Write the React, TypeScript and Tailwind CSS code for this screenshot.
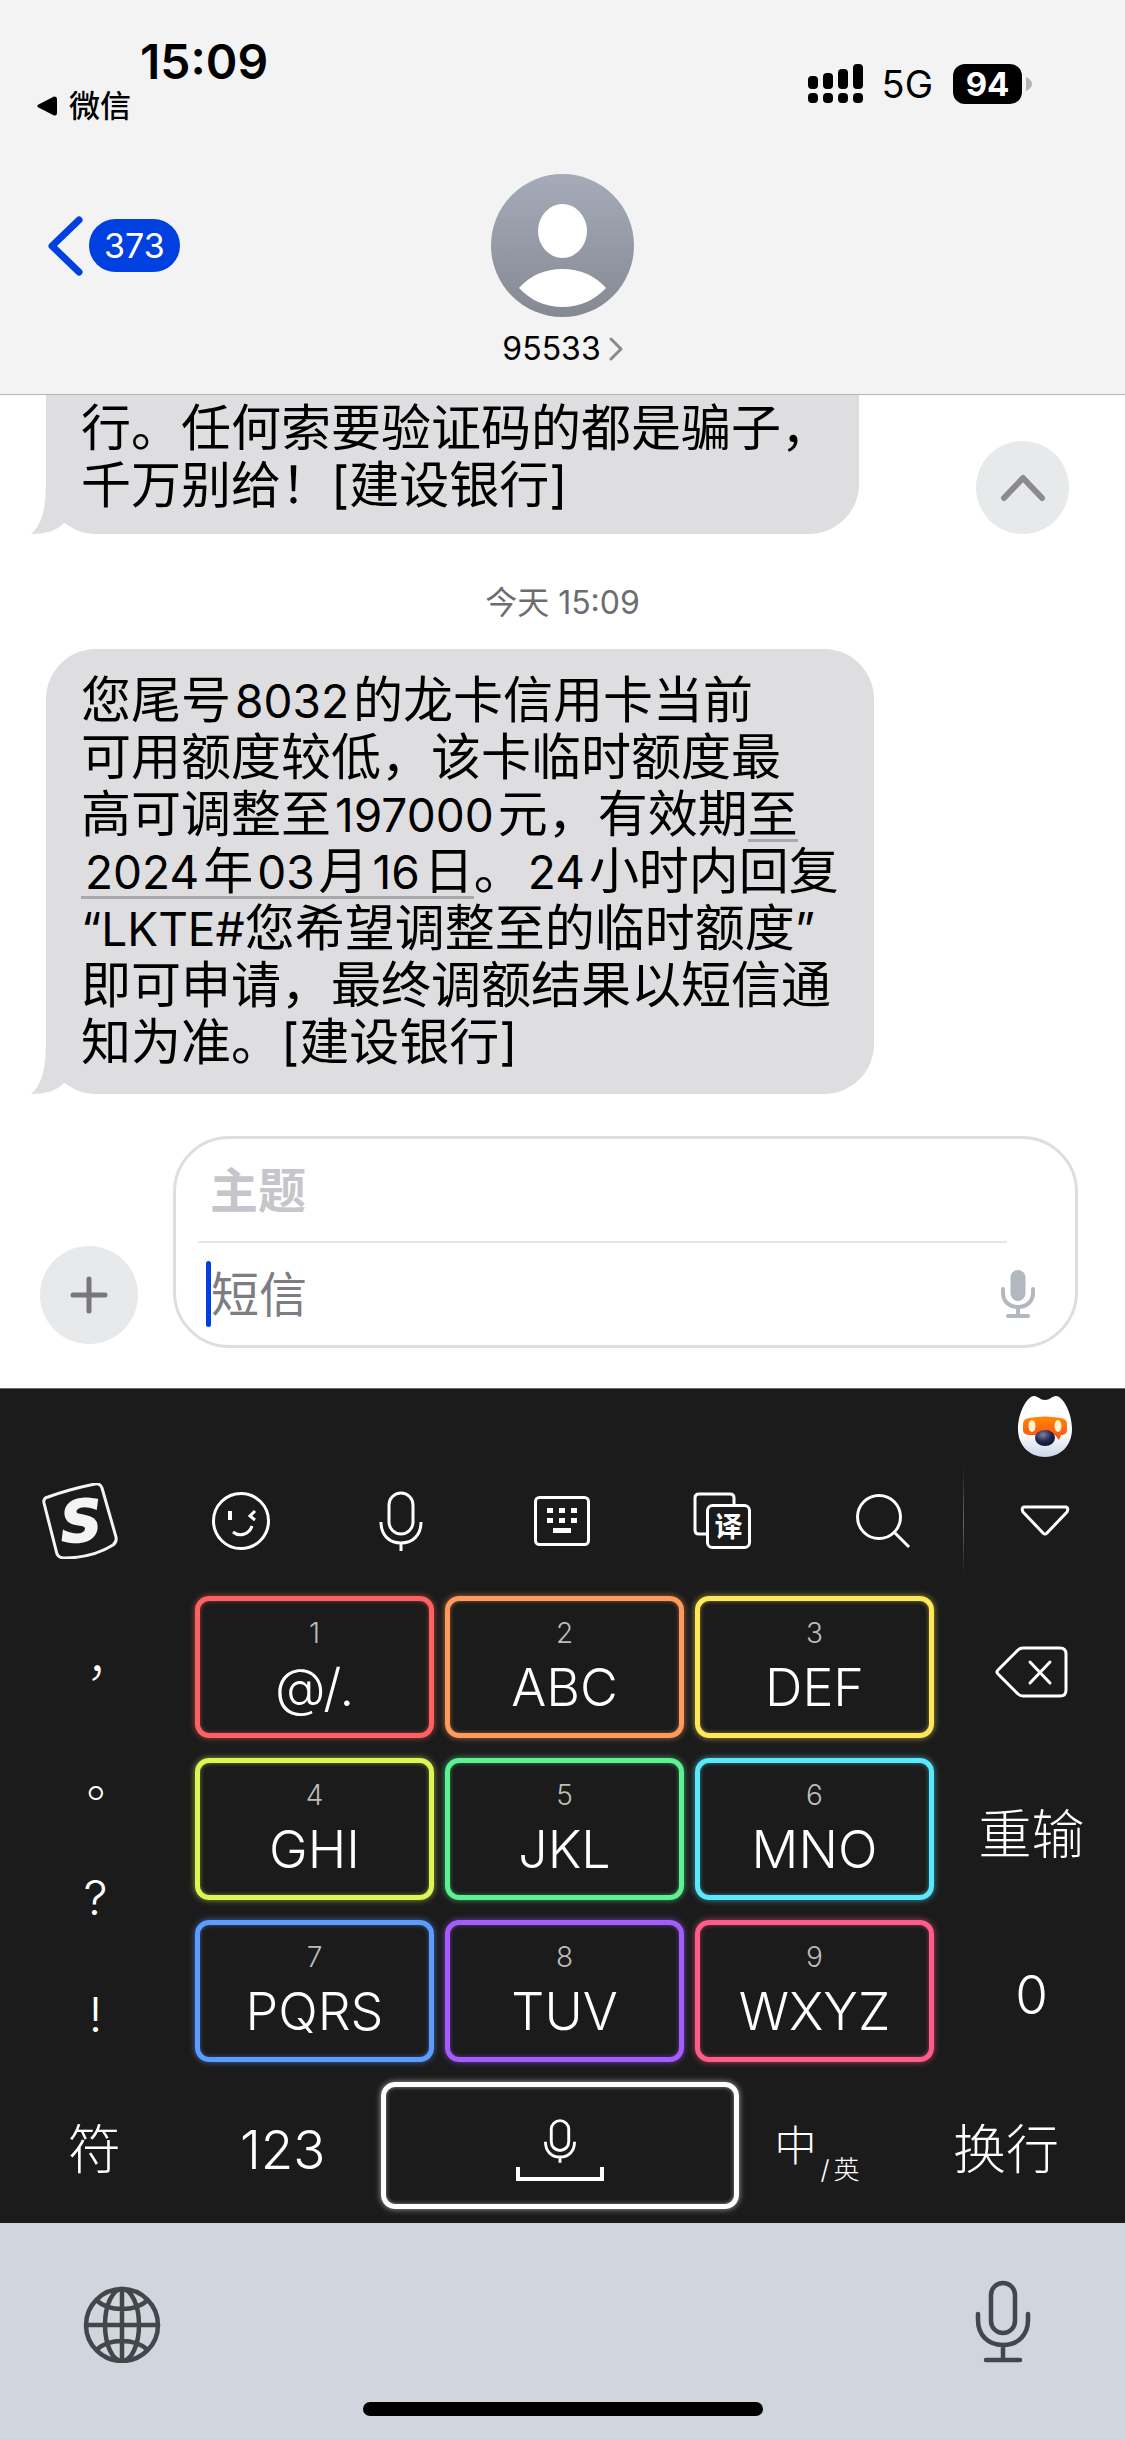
import React from 'react'

const BUBBLE_ONE = ['行。任何索要验证码的都是骗子，', '千万别给！[建设银行]']

const KEYS = [
  { num: '1', label: '@/.', color: 'border-[#ff6161] shadow-[0_0_6px_#ff616199,inset_0_0_4px_#ff616180]' },
  { num: '2', label: 'ABC', color: 'border-[#ff9a5c] shadow-[0_0_6px_#ff9a5c99,inset_0_0_4px_#ff9a5c80]' },
  { num: '3', label: 'DEF', color: 'border-[#ffe75a] shadow-[0_0_6px_#ffe75a99,inset_0_0_4px_#ffe75a80]' },
  { num: '4', label: 'GHI', color: 'border-[#dcf755] shadow-[0_0_6px_#dcf75599,inset_0_0_4px_#dcf75580]' },
  { num: '5', label: 'JKL', color: 'border-[#5cf292] shadow-[0_0_6px_#5cf29299,inset_0_0_4px_#5cf29280]' },
  { num: '6', label: 'MNO', color: 'border-[#5ae8fb] shadow-[0_0_6px_#5ae8fb99,inset_0_0_4px_#5ae8fb80]' },
  { num: '7', label: 'PQRS', color: 'border-[#5c9bff] shadow-[0_0_6px_#5c9bff99,inset_0_0_4px_#5c9bff80]' },
  { num: '8', label: 'TUV', color: 'border-[#a55cff] shadow-[0_0_6px_#a55cff99,inset_0_0_4px_#a55cff80]' },
  { num: '9', label: 'WXYZ', color: 'border-[#ff5c8a] shadow-[0_0_6px_#ff5c8a99,inset_0_0_4px_#ff5c8a80]' },
]

// Latin runs and digits sit slightly smaller than the Chinese glyphs around them
function Mixed({ text }: { text: string }) {
  const parts = text.split(/([0-9]+|[A-Z#“”]+)/)
  return (
    <>
      {parts.map((part, i) => {
        if (/^[0-9]/.test(part)) return <span key={i} className="mx-1 text-[46px] leading-none">{part}</span>
        if (/^[A-Z#“”]/.test(part)) return <span key={i} className="text-[46px] leading-none">{part}</span>
        return part
      })}
    </>
  )
}

function DateLink({ text }: { text: string }) {
  return (
    <a href="#date" className="inline-block leading-none border-b-3 border-[#a9a9ac]">
      <Mixed text={text} />
    </a>
  )
}

function Bubble({ className, children }: { className: string; children: React.ReactNode }) {
  return (
    <div className={`relative w-fit bg-[#dedee1] pl-[35px] text-[50px] leading-[57px] whitespace-nowrap text-black ${className}`}>
      {children}
      <svg className="absolute bottom-0 -left-[15px]" width="48" height="60" viewBox="0 0 48 60" fill="#dedee1">
        <path d="M15 6C15 32 12 50 0 60C14 60 26 57 34 48L40 30L18 6Z" />
      </svg>
    </div>
  )
}

function StatusBar() {
  return (
    <div className="flex justify-between items-center pt-9 pl-[37px] pr-[93px]">
      <div>
        <div className="pl-[103px] text-[48px] leading-[52px] font-semibold">15:09</div>
        <a href="#wechat" className="flex items-center gap-3 text-[31px] leading-9 font-medium">
          <svg width="20" height="20" viewBox="0 0 20 20"><path d="M1.500 8.500 17 .5Q20 0 20 3V17Q20 20 17 19.500L1.500 11.500Q-1 10 1.500 8.500Z" /></svg>
          微信
        </a>
      </div>
      <div className="flex items-center pt-2">
        <svg width="56" height="40" viewBox="0 0 56 40">
          <rect x="0" y="12" width="10" height="13" rx="4" />
          <rect x="15" y="9" width="10" height="16" rx="4" />
          <rect x="30" y="5" width="10" height="20" rx="4" />
          <rect x="45" y="0" width="10" height="25" rx="4" />
          <rect x="0" y="29" width="10" height="10" rx="4" />
          <rect x="15" y="29" width="10" height="10" rx="4" />
          <rect x="30" y="29" width="10" height="10" rx="4" />
          <rect x="45" y="29" width="10" height="10" rx="4" />
        </svg>
        <span className="ml-[18px] text-[38px] leading-10">5G</span>
        <span className="ml-5 w-[69px] h-10 rounded-xl bg-black text-white text-[33px] leading-10 font-bold text-center">94</span>
        <svg className="ml-1" width="6" height="14" viewBox="0 0 6 14"><path d="M0 0Q6 3 6 7T0 14Z" fill="#b5b5b7" /></svg>
      </div>
    </div>
  )
}

function NavBar() {
  return (
    <nav className="grid grid-cols-3 mt-[50px] pb-[25px]">
      <button aria-label="返回" className="flex items-center gap-1 h-[143px] pl-[47px]">
        <svg width="38" height="62" viewBox="0 0 38 62" fill="none" stroke="#0040e0" strokeWidth="7" strokeLinecap="round" strokeLinejoin="round">
          <path d="M32 5 5 31 32 57" />
        </svg>
        <span className="px-[15px] rounded-full bg-[#0040e0] text-white text-[34px] leading-[53px]">373</span>
      </button>
      <button className="flex flex-col items-center gap-3">
        <svg width="143" height="143" viewBox="0 0 143 143">
          <defs>
            <linearGradient id="avatar" x1="0" y1="0" x2="0" y2="1">
              <stop offset="0" stopColor="#a5abb9" />
              <stop offset="1" stopColor="#858993" />
            </linearGradient>
          </defs>
          <circle cx="71.500" cy="71.500" r="71.500" fill="url(#avatar)" />
          <ellipse cx="71.500" cy="57" rx="24.500" ry="27" fill="#fff" />
          <path d="M28 114Q45 95 71.500 95T115 114Q97 133 71.500 133T28 114Z" fill="#fff" />
        </svg>
        <span className="flex items-center gap-2 text-[32px] leading-10">
          95533
          <svg width="14" height="24" viewBox="0 0 14 24" fill="none" stroke="#8a8a8e" strokeWidth="3" strokeLinecap="round" strokeLinejoin="round"><path d="M2 2 12 12 2 22" /></svg>
        </span>
      </button>
    </nav>
  )
}

function Messages() {
  return (
    <main className="relative pl-[46px]">
      <Bubble className="pt-[5px] pb-5 pr-7 rounded-b-[50px]">
        {BUBBLE_ONE.map(line => <p key={line}>{line}</p>)}
      </Bubble>
      <time className="block mt-[49px] -ml-[46px] text-center text-[32px] leading-10 text-[#6c6c71]">今天 15:09</time>
      <Bubble className="mt-[26px] pt-[23px] pb-[23px] pr-[35px] rounded-[50px]">
        <p><Mixed text="您尾号8032的龙卡信用卡当前" /></p>
        <p>可用额度较低，该卡临时额度最</p>
        <p className="h-[57px]"><Mixed text="高可调整至197000元，有效期" /><DateLink text="至" /></p>
        <p className="h-[57px]"><DateLink text="2024年03月16日" /><Mixed text="。24小时内回复" /></p>
        <p><Mixed text="“LKTE#您希望调整至的临时额度”" /></p>
        <p>即可申请，最终调额结果以短信通</p>
        <p>知为准。[建设银行]</p>
      </Bubble>
      <button aria-label="回到顶部" className="absolute top-[46px] right-14 flex items-center justify-center size-[93px] rounded-full bg-[#e8e9eb]">
        <svg width="46" height="28" viewBox="0 0 46 28" fill="none" stroke="#8a8a90" strokeWidth="6" strokeLinecap="round" strokeLinejoin="round"><path d="M4 24 23 4 42 24" /></svg>
      </button>
    </main>
  )
}

function Composer() {
  return (
    <form className="flex items-end gap-[35px] pl-10 pr-[47px] pt-[42px] pb-10">
      <button type="button" aria-label="添加" className="flex items-center justify-center shrink-0 size-[98px] mb-1 rounded-full bg-[#e8e9eb]">
        <svg width="38" height="38" viewBox="0 0 38 38" fill="none" stroke="#77777c" strokeWidth="5" strokeLinecap="round"><path d="M19 3V35M3 19H35" /></svg>
      </button>
      <div className="flex-1 pl-[22px] border-3 border-[#dedede] rounded-[56px]">
        <div className="mr-[68px] pl-3 border-b-2 border-[#e6e6e8]">
          <input aria-label="主题" placeholder="主题" className="block w-full h-[102px] text-[48px] font-bold placeholder:text-[#c5c5cb] outline-none" />
        </div>
        <div className="flex items-center h-[102px] pl-2 pr-10">
          <span className="w-[5px] h-[66px] rounded-full bg-[#0040e0]" />
          <input aria-label="短信" placeholder="短信" className="flex-1 min-w-0 h-[100px] text-[48px] placeholder:text-[#7c7c82] outline-none" />
          <button type="button" aria-label="语音">
            <svg width="34" height="50" viewBox="0 0 34 50" fill="none" stroke="#b2b7c0" strokeWidth="4" strokeLinecap="round">
              <rect x="9.500" y="1" width="15" height="31" rx="7.500" fill="#b2b7c0" stroke="none" />
              <path d="M2 20V24C2 32 8 38 17 38S32 32 32 24V20M17 38V46M7 47H27" />
            </svg>
          </button>
        </div>
      </div>
    </form>
  )
}

function MicLine({ width, height, stroke }: { width: number; height: number; stroke: number }) {
  return (
    <svg width={width} height={height} viewBox="0 0 44 60" fill="none" stroke="#fff" strokeWidth={stroke}>
      <rect x="10" y="2" width="24" height="41" rx="12" />
      <path d="M2 31C2 44 10 52 22 52S42 44 42 31M22 52V60" />
    </svg>
  )
}

function Toolbar() {
  return (
    <div className="flex items-center h-[110px]">
      <div className="grid grid-cols-6 items-center justify-items-center flex-1">
        <button aria-label="搜狗">
          <svg width="76" height="76" viewBox="0 0 76 76">
            <path d="M6 14Q28 6 53 1Q58 0 60 5L74 54Q75 59 71 62Q50 75 22 75Q17 75 15 71L2 20Q1 15 6 14Z" fill="none" stroke="#f4f4f4" strokeWidth="3" />
            <text x="39" y="58" textAnchor="middle" transform="rotate(-4 39 38)" fontFamily="DejaVu Sans" fontWeight="700" fontStyle="italic" fontSize="57" fill="#f4f4f4" stroke="#f4f4f4" strokeWidth="2">S</text>
          </svg>
        </button>
        <button aria-label="表情">
          <svg width="60" height="60" viewBox="0 0 60 60" fill="none" stroke="#fff" strokeWidth="3">
            <circle cx="30" cy="30" r="27.500" />
            <path d="M19 20V29" strokeWidth="4" />
            <path d="M44 20 39 25 44 29M22 41C28 46 38 44 41 35" />
          </svg>
        </button>
        <button aria-label="语音输入"><MicLine width={44} height={60} stroke={3} /></button>
        <button aria-label="键盘">
          <svg width="56" height="50" viewBox="0 0 56 50" fill="none" stroke="#fff" strokeWidth="3">
            <rect x="1.500" y="1.500" width="53" height="47" rx="4" />
            <g fill="#fff" stroke="none">
              <rect x="13" y="12" width="6" height="5" /><rect x="25" y="12" width="6" height="5" /><rect x="37" y="12" width="6" height="5" />
              <rect x="13" y="22" width="6" height="5" /><rect x="25" y="22" width="6" height="5" /><rect x="37" y="22" width="6" height="5" />
              <rect x="19" y="32" width="18" height="5" />
            </g>
          </svg>
        </button>
        <button aria-label="翻译">
          <svg width="58" height="58" viewBox="0 0 58 58" fill="none" stroke="#fff" strokeWidth="3">
            <path d="M14 42H6Q2 42 2 38V6Q2 2 6 2H37Q41 2 41 6V13" />
            <rect x="14.500" y="13.500" width="42" height="42" rx="5" />
            <text x="35.500" y="45" textAnchor="middle" fontFamily="Noto Sans CJK SC" fontWeight="700" fontSize="28" fill="#fff" stroke="none">译</text>
          </svg>
        </button>
        <button aria-label="搜索">
          <svg width="56" height="56" viewBox="0 0 56 56" fill="none" stroke="#fff" strokeWidth="3">
            <circle cx="24" cy="24" r="21.500" />
            <path d="M40 40 54 54" />
          </svg>
        </button>
      </div>
      <div className="w-px h-full bg-linear-to-b from-transparent via-[#666] to-transparent" />
      <button aria-label="收起" className="flex justify-center w-[161px]">
        <svg width="50" height="32" viewBox="0 0 50 32" fill="none" stroke="#fff" strokeWidth="3" strokeLinejoin="round"><path d="M4 2H46Q49 3 47 7L27 28Q25 30 23 28L3 7Q1 3 4 2Z" /></svg>
      </button>
    </div>
  )
}

function Mascot() {
  return (
    <svg width="56" height="64" viewBox="0 0 56 64">
      <defs>
        <linearGradient id="fur" x1="0" y1="0" x2="0" y2="1">
          <stop offset=".6" stopColor="#fff" />
          <stop offset="1" stopColor="#ccd6e8" />
        </linearGradient>
        <linearGradient id="visor" x1="0" y1="0" x2="0" y2="1">
          <stop offset="0" stopColor="#ff8a00" />
          <stop offset="1" stopColor="#ff4a1c" />
        </linearGradient>
        <radialGradient id="nose" cx=".4" cy=".3" r=".7">
          <stop offset="0" stopColor="#7d83a8" />
          <stop offset=".6" stopColor="#23264a" />
          <stop offset="1" stopColor="#14162e" />
        </radialGradient>
      </defs>
      <path d="M17 1C21 1 23 5 28 5S35 1 39 1C46 1 55 18 55 34C55 51 43 62 28 62S1 51 1 34C1 18 10 1 17 1Z" fill="url(#fur)" />
      <path d="M12 23Q28 20 44 23Q50 24 50 29V36Q49 40 44 40L42 45L38 40H13Q7 40 6 36V29Q6 24 12 23Z" fill="url(#visor)" />
      <ellipse cx="15" cy="31" rx="3.500" ry="6" fill="#fff3d0" />
      <ellipse cx="41" cy="31" rx="3.500" ry="6" fill="#fff3d0" />
      <ellipse cx="28" cy="43" rx="10" ry="8" fill="url(#nose)" />
    </svg>
  )
}

function Keyboard() {
  return (
    <section className="bg-[#1b1b1b] border-t border-[#6b6b6b] text-white font-light pb-3.5">
      <div className="flex justify-end pt-1.5 pr-[52px]"><Mascot /></div>
      <div className="pt-[7px]"><Toolbar /></div>

      {/* nine-key pad with punctuation on the left and actions on the right */}
      <div className="flex mt-5">
        <div className="grid grid-rows-4 w-[195px] mt-2 -mb-3 pr-1 text-[48px]">
          <button className="pl-[30px] pb-4 font-['Noto_Sans_CJK_SC',sans-serif]">，</button>
          <button className="pl-[30px]">。</button>
          <button>?</button>
          <button>!</button>
        </div>
        <div className="grid grid-cols-3 gap-x-[11px] gap-y-5 flex-1">
          {KEYS.map(key => (
            <button key={key.num} className={`flex flex-col items-center h-[142px] pt-4 border-5 rounded-[14px] ${key.color}`}>
              <span className="text-[28px] leading-8 text-[#bdbdbd]">{key.num}</span>
              <span className="mt-2 text-[52px] leading-[62px]">{key.label}</span>
            </button>
          ))}
        </div>
        <div className="grid grid-rows-3 gap-y-5 justify-items-center w-[191px] pt-1.5 pl-1 text-[53px]">
          <button aria-label="删除">
            <svg width="74" height="52" viewBox="0 0 74 52" fill="none" stroke="#fff" strokeWidth="3" strokeLinecap="round" strokeLinejoin="round">
              <path d="M28 2H65Q71 2 71 8V44Q71 50 65 50H28Q25 50 23 48L3 28Q1 26 3 24L23 4Q25 2 28 2Z" />
              <path d="M35 16 55 37M55 16 35 37" />
            </svg>
          </button>
          <button className="pt-2">重输</button>
          <button className="pt-2">0</button>
        </div>
      </div>

      <div className="flex items-center mt-5 text-[53px]">
        <button className="flex-1 pt-2.5">符</button>
        <button className="flex-1 pt-2.5">123</button>
        <button aria-label="空格" className="flex flex-col items-center justify-center w-[358px] h-[127px] ml-1 mr-2 pt-2 border-5 border-white rounded-[14px] shadow-[0_0_6px_#ffffff99,inset_0_0_4px_#ffffff80]">
          <MicLine width={32} height={44} stroke={4} />
          <svg className="mt-1" width="88" height="14" viewBox="0 0 88 14" fill="none" stroke="#fff" strokeWidth="4"><path d="M2 0V12H86V0" /></svg>
        </button>
        <button className="flex items-end justify-center gap-1 w-[140px] pt-5">
          <span className="pb-5 text-[42px] leading-10">中</span>
          <span className="flex items-center gap-1 text-[26px] leading-8">/<span>英</span></span>
        </button>
        <button className="w-[238px] pt-2.5">换行</button>
      </div>
    </section>
  )
}

function BottomBar() {
  return (
    <footer className="bg-[#d1d5dd] pt-[57px] pb-[23px]">
      <div className="flex justify-between pl-[82px] pr-[94px]">
        <button aria-label="切换键盘">
          <svg width="80" height="82" viewBox="0 0 80 82" fill="none" stroke="#43474b" strokeWidth="4.500">
            <circle cx="40" cy="44" r="36" />
            <ellipse cx="40" cy="44" rx="17" ry="36" />
            <path d="M40 8V80M4 44H76M14 19Q24 28 40 28T66 19M14 69Q24 60 40 60T66 69" />
          </svg>
        </button>
        <button aria-label="听写">
          <svg width="56" height="84" viewBox="0 0 56 84" fill="none" stroke="#43474b" strokeWidth="4.500" strokeLinecap="round">
            <rect x="16" y="3" width="24" height="50" rx="12" />
            <path d="M3 34V40C3 55 13 65 28 65S53 55 53 40V34M28 65V80M11 80H45" />
          </svg>
        </button>
      </div>
      <div className="w-[400px] h-3.5 mt-[38px] mx-auto rounded-full bg-black" />
    </footer>
  )
}

export default function App() {
  return (
    <div className="w-full overflow-hidden bg-white font-['Inter','Noto_Sans_CJK_SC',sans-serif] text-black">
      <header className="bg-[#f3f3f3] border-b border-[#b4b4b6]">
        <StatusBar />
        <NavBar />
      </header>
      <Messages />
      <Composer />
      <Keyboard />
      <BottomBar />
    </div>
  )
}
